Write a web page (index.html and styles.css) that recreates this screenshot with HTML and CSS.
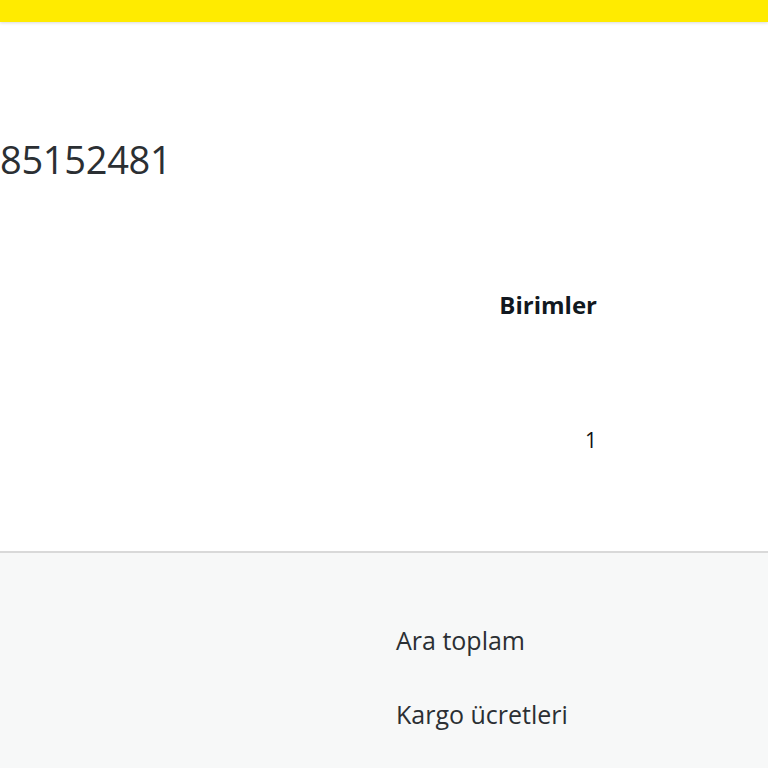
FILE: index.html
```html
<!DOCTYPE html>
<html lang="tr">
<head>
  <meta charset="UTF-8" />
  <meta name="viewport" content="width=device-width, initial-scale=1.0"/>
  <title>Sipariş 85152481</title>
  <link rel="stylesheet" href="styles.css">
</head>
<body>
  <div class="topbar"></div>
  <div class="order">
    <h1 class="order-no">85152481</h1>
    <div class="items">
      <div class="items-head">
        <span class="col-units">Birimler</span>
      </div>
      <div class="items-row">
        <span class="col-units">1</span>
      </div>
    </div>
  </div>
  <div class="summary">
    <div class="summary-row">Ara toplam</div>
    <div class="summary-row">Kargo ücretleri</div>
  </div>
</body>
</html>
```

FILE: styles.css
```css
* {
  box-sizing: border-box;
}
body {
  margin: 0;
  padding: 0;
  font-family: 'Open Sans', 'Noto Sans', sans-serif;
  color: #2b2f33;
  background-color: #fff;
  width: 768px;
  height: 768px;
  overflow: hidden;
}
.topbar {
  height: 22px;
  background-color: #ffeb00;
  box-shadow: 0 1px 3px rgba(0,0,0,0.15);
  position: relative;
}
.order {
  height: 529px;
  display: flex;
  flex-direction: column;
}
.order-no {
  margin: 0;
  padding-top: 111px;
  font-size: 38px;
  font-weight: 400;
  line-height: 52px;
  letter-spacing: -0.3px;
}
.items {
  display: flex;
  flex-direction: column;
  padding-right: 171px;
}
.items-head {
  display: flex;
  justify-content: flex-end;
  margin-top: 104px;
  font-size: 24px;
  font-weight: 700;
  line-height: 32px;
  color: #111820;
}
.items-row {
  display: flex;
  justify-content: flex-end;
  margin-top: 105px;
  font-size: 21px;
  line-height: 28px;
  color: #111;
}
.summary {
  border-top: 2px solid #d9d9d9;
  background-color: #f7f8f8;
  height: 217px;
  padding-left: 396px;
  padding-top: 71px;
}
.summary-row {
  font-size: 25px;
  line-height: 32px;
  margin-bottom: 42px;
  color: #2b2f33;
}
```
